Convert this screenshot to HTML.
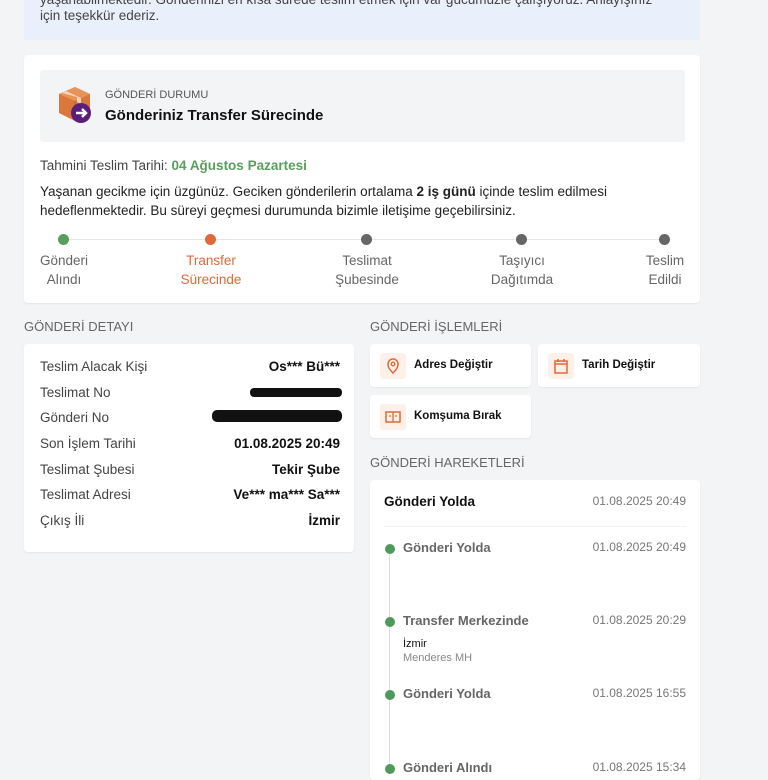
<!DOCTYPE html>
<html><head><meta charset="utf-8"><style>
*{margin:0;padding:0;box-sizing:border-box}
body{width:768px;height:768px;overflow:hidden;background:#f3f4f6;font-family:"Liberation Sans",sans-serif;color:#111;position:relative}
.abs{position:absolute}
.card{position:absolute;background:#fff;border-radius:4px;box-shadow:0 1px 2px rgba(0,0,0,.06)}
.t{position:absolute;white-space:nowrap}
.hdr{font-size:13px;color:#666}
.lbl{font-size:13.5px;color:#444}
.val{font-size:13.5px;font-weight:bold;text-align:right}
.dot{position:absolute;width:11px;height:11px;border-radius:50%}
.step{position:absolute;font-size:13.5px;color:#666;text-align:center;line-height:19px;width:100px}
.act{position:absolute;background:#fff;border-radius:4px;height:43px;box-shadow:0 1px 2px rgba(0,0,0,.06)}
.ico{position:absolute;left:10px;top:9px;width:26px;height:26px;background:#fdf0e8;border-radius:3px}
.act span{position:absolute;left:44px;top:15px;font-size:11.5px;font-weight:bold}
.gd{position:absolute;width:10px;height:10px;border-radius:50%;background:#4f9a5a;left:385px}
.ev{font-size:13px;font-weight:bold;color:#666}
.tm{font-size:12px;color:#777}
</style></head><body>
<div class="abs" style="left:24px;top:0;width:676px;height:40px;background:#eaf0fb"></div>
<div class="t" style="left:40px;top:-8px;font-size:13.5px;color:#444">yaşanabilmektedir. Gönderinizi en kısa sürede teslim etmek için var gücümüzle çalışıyoruz. Anlayışınız</div>
<div class="t" style="left:40px;top:8px;font-size:13.5px;color:#444">için teşekkür ederiz.</div>

<div class="card" style="left:24px;top:55px;width:676px;height:248px"></div>
<div class="abs" style="left:40px;top:70px;width:645px;height:72px;background:#f3f4f6;border-radius:3px"></div>
<svg class="abs" style="left:57px;top:85px" width="36" height="40" viewBox="0 0 36 40">
<path d="M2 9 L18 2 L33 9 L33 28 L18 36 L2 28Z" fill="#d9783a"/>
<path d="M2 9 L18 16 L33 9 L18 2Z" fill="#e8935a"/>
<path d="M18 16 L18 36" stroke="#b85f28" stroke-width="1"/>
<path d="M9 6 L24 13 L24 19 L20 17 L20 12 L5 8Z" fill="#f5d2b8"/>
<circle cx="24" cy="28" r="10" fill="#5b1e7a"/>
<path d="M19 28 H28 M25 24 L29 28 L25 32" stroke="#fff" stroke-width="2.5" fill="none"/>
</svg>
<div class="t" style="left:105px;top:89px;font-size:11px;color:#555">GÖNDERİ DURUMU</div>
<div class="t" style="left:105px;top:107px;font-size:15px;font-weight:bold">Gönderiniz Transfer Sürecinde</div>
<div class="t" style="left:40px;top:158px;font-size:13.5px;color:#444">Tahmini Teslim Tarihi: <b style="color:#5a9e5e">04 Ağustos Pazartesi</b></div>
<div class="t" style="left:40px;top:182px;font-size:13.5px;color:#222;line-height:19px">Yaşanan gecikme için üzgünüz. Geciken gönderilerin ortalama <b>2 iş günü</b> içinde teslim edilmesi<br>hedeflenmektedir. Bu süreyi geçmesi durumunda bizimle iletişime geçebilirsiniz.</div>
<div class="abs" style="left:64px;top:239px;width:601px;height:1px;background:#e5e5e5"></div>
<div class="dot" style="left:58px;top:234px;background:#5a9e5e"></div>
<div class="dot" style="left:205px;top:234px;background:#e0693a"></div>
<div class="dot" style="left:361px;top:234px;background:#666"></div>
<div class="dot" style="left:516px;top:234px;background:#666"></div>
<div class="dot" style="left:659px;top:234px;background:#666"></div>
<div class="step" style="left:14px;top:251px">Gönderi<br>Alındı</div>
<div class="step" style="left:161px;top:251px;color:#e0693a">Transfer<br>Sürecinde</div>
<div class="step" style="left:317px;top:251px">Teslimat<br>Şubesinde</div>
<div class="step" style="left:472px;top:251px">Taşıyıcı<br>Dağıtımda</div>
<div class="step" style="left:615px;top:251px">Teslim<br>Edildi</div>

<div class="t hdr" style="left:24px;top:319px">GÖNDERİ DETAYI</div>
<div class="card" style="left:24px;top:344px;width:330px;height:208px"></div>
<div class="t lbl" style="left:40px;top:359px">Teslim Alacak Kişi</div><div class="t val" style="right:428px;top:359px">Os*** Bü***</div>
<div class="t lbl" style="left:40px;top:385px">Teslimat No</div>
<div class="abs" style="left:250px;top:388px;width:92px;height:9px;background:#111;border-radius:4px"></div>
<div class="t lbl" style="left:40px;top:410px">Gönderi No</div>
<div class="abs" style="left:212px;top:410px;width:130px;height:12px;background:#111;border-radius:5px"></div>
<div class="t lbl" style="left:40px;top:436px">Son İşlem Tarihi</div><div class="t val" style="right:428px;top:436px">01.08.2025 20:49</div>
<div class="t lbl" style="left:40px;top:462px">Teslimat Şubesi</div><div class="t val" style="right:428px;top:462px">Tekir Şube</div>
<div class="t lbl" style="left:40px;top:487px">Teslimat Adresi</div><div class="t val" style="right:428px;top:487px">Ve*** ma*** Sa***</div>
<div class="t lbl" style="left:40px;top:513px">Çıkış İli</div><div class="t val" style="right:428px;top:513px">İzmir</div>

<div class="t hdr" style="left:370px;top:319px">GÖNDERİ İŞLEMLERİ</div>
<div class="act" style="left:370px;top:344px;width:161px"><div class="ico"><svg width="26" height="26"><path d="M13 20 C8 15 8 13 8 11 A5 5 0 0 1 18 11 C18 13 18 15 13 20Z" stroke="#e0693a" stroke-width="1.5" fill="none"/><circle cx="13" cy="11" r="1.8" stroke="#e0693a" stroke-width="1.3" fill="none"/></svg></div><span>Adres Değiştir</span></div>
<div class="act" style="left:538px;top:344px;width:162px"><div class="ico"><svg width="26" height="26"><rect x="7" y="8" width="12" height="12" stroke="#e0693a" stroke-width="1.5" fill="none"/><path d="M7 11H19M10 6V9M16 6V9" stroke="#e0693a" stroke-width="1.5"/></svg></div><span>Tarih Değiştir</span></div>
<div class="act" style="left:370px;top:395px;width:161px"><div class="ico"><svg width="26" height="26"><rect x="6" y="8" width="14" height="10" stroke="#e0693a" stroke-width="1.5" fill="none"/><path d="M13 8V18M9 12H11M15 12H17" stroke="#e0693a" stroke-width="1.3"/></svg></div><span>Komşuma Bırak</span></div>

<div class="t hdr" style="left:370px;top:455px">GÖNDERİ HAREKETLERİ</div>
<div class="card" style="left:370px;top:480px;width:330px;height:300px"></div>
<div class="t" style="left:384px;top:494px;font-size:13.5px;font-weight:bold">Gönderi Yolda</div>
<div class="t tm" style="right:82px;top:494px">01.08.2025 20:49</div>
<div class="abs" style="left:384px;top:526px;width:302px;height:1px;background:#f2f2f2"></div>
<div class="abs" style="left:389px;top:550px;width:1px;height:218px;background:#ddd"></div>
<div class="gd" style="top:544px"></div><div class="t ev" style="left:403px;top:540px">Gönderi Yolda</div><div class="t tm" style="right:82px;top:540px">01.08.2025 20:49</div>
<div class="gd" style="top:617px"></div><div class="t ev" style="left:403px;top:613px">Transfer Merkezinde</div><div class="t tm" style="right:82px;top:613px">01.08.2025 20:29</div>
<div class="t" style="left:403px;top:638px;font-size:11px">İzmir</div>
<div class="t" style="left:403px;top:652px;font-size:11px;color:#888">Menderes MH</div>
<div class="gd" style="top:690px"></div><div class="t ev" style="left:403px;top:686px">Gönderi Yolda</div><div class="t tm" style="right:82px;top:686px">01.08.2025 16:55</div>
<div class="gd" style="top:764px"></div><div class="t ev" style="left:403px;top:760px">Gönderi Alındı</div><div class="t tm" style="right:82px;top:760px">01.08.2025 15:34</div>
</body></html>
